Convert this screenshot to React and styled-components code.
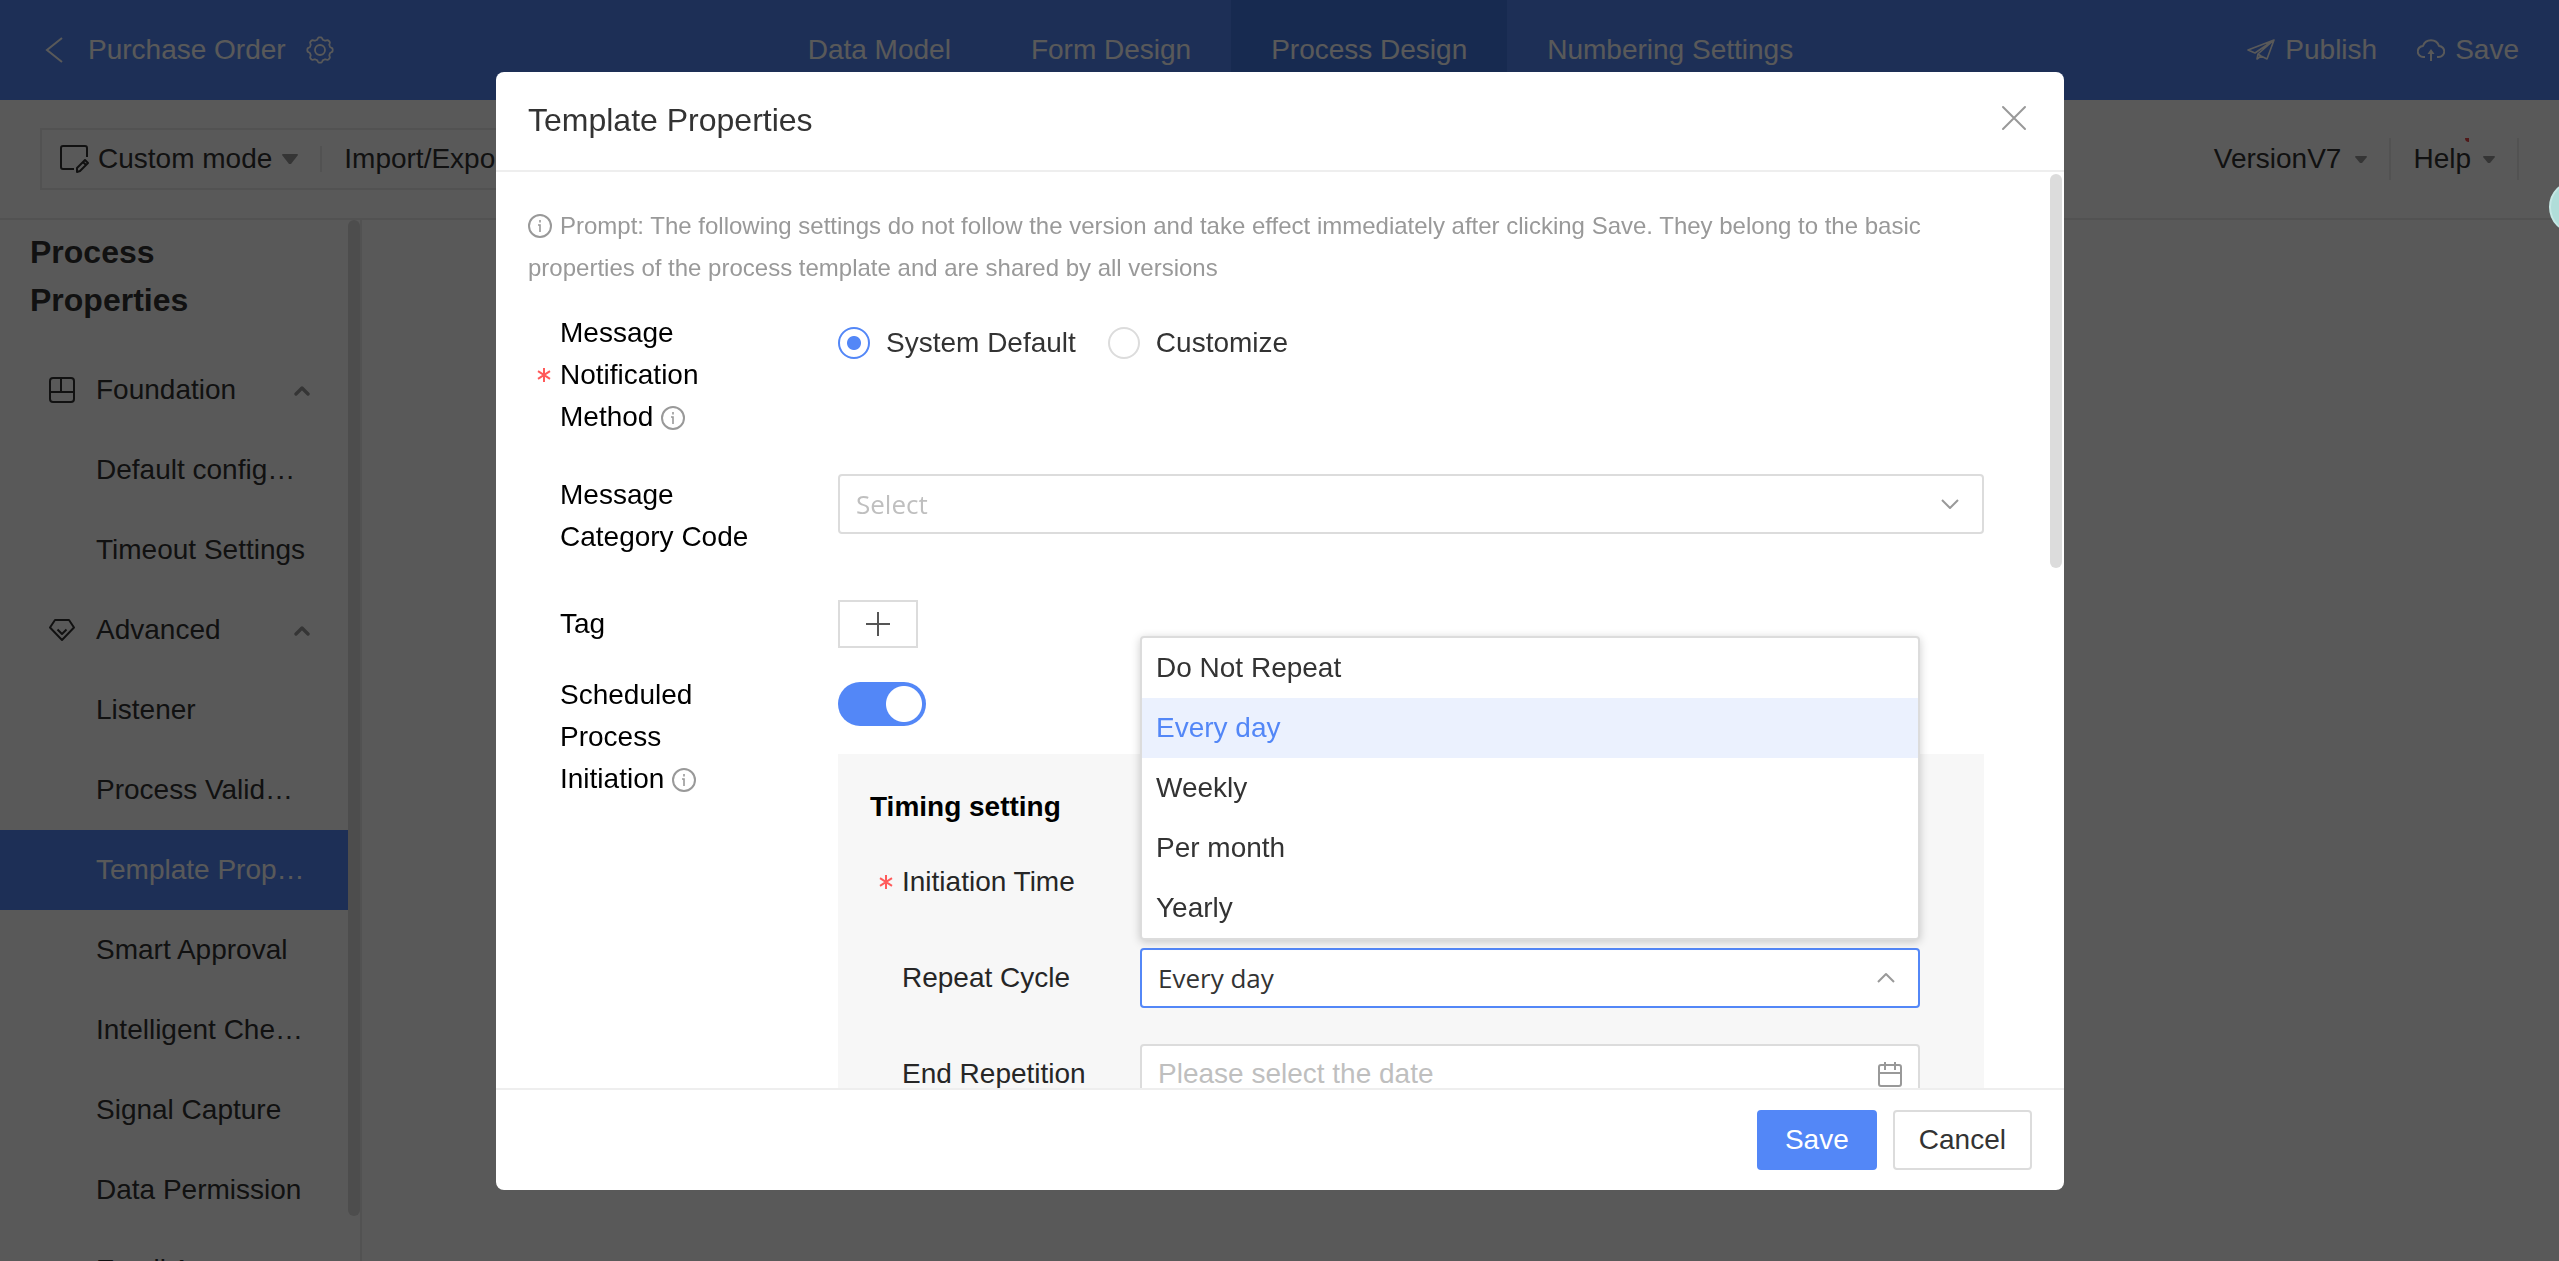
import React from "react";
import styled, { createGlobalStyle, css } from "styled-components";

const font = '"Liberation Sans", Arial, sans-serif';
const inputFont = '"Open Sans", "Segoe UI", sans-serif';
const blue = "#5387f7";

const Global = createGlobalStyle`
  * { box-sizing: border-box; }
  html, body { margin: 0; height: 100%; }
  body { overflow: hidden; font-family: ${font}; font-size: 28px; color: #333; background: #fff; }
  button, input, select { font: inherit; color: inherit; margin: 0; }
  ul, h1, h2, h3, p { margin: 0; padding: 0; font: inherit; list-style: none; }
  svg { display: block; flex: none; }
`;

const Page = styled.div`
  height: 100vh;
  display: flex;
  flex-direction: column;
`;

/* ---------- header ---------- */
const Header = styled.header`
  height: 100px;
  flex: none;
  display: flex;
  align-items: stretch;
  background: ${blue};
  color: #fff;
`;
const HeaderLeft = styled.div`
  width: 30%;
  display: flex;
  align-items: center;
  padding-left: 42px;
  gap: 20px;
`;
const BareButton = styled.button`
  display: inline-flex;
  align-items: center;
  gap: ${(p) => p.$gap || 0}px;
  padding: 0;
  border: 0;
  background: none;
  white-space: nowrap;
`;
const Tabs = styled.nav`
  display: flex;
`;
const Tab = styled.a`
  display: flex;
  align-items: center;
  padding: 0 40px;
  color: inherit;
  text-decoration: none;
  white-space: nowrap;
  background: ${(p) => (p.$active ? "#4378e6" : "none")};
`;
const HeaderRight = styled.div`
  margin-left: auto;
  display: flex;
  align-items: center;
  gap: 40px;
  padding-right: 40px;
`;

/* ---------- toolbar ---------- */
const Toolbar = styled.div`
  height: 120px;
  flex: none;
  display: flex;
  align-items: center;
  justify-content: space-between;
  padding: 0 40px;
  border-bottom: 2px solid #ececec;
`;
const ToolGroup = styled.div`
  height: 62px;
  width: 720px;
  display: flex;
  align-items: center;
  padding: 0 18px;
  gap: 22px;
  border: 2px solid #ececec;
`;
const Divider = styled.span`
  width: 2px;
  height: ${(p) => p.$h}px;
  background: #ececec;
`;
const CaretGap = styled.span`
  display: inline-flex;
  align-items: center;
  gap: 10px;
`;
const ToolRight = styled.div`
  display: flex;
  align-items: center;
  gap: 22px;
`;
const HelpButton = styled(BareButton)`
  position: relative;
`;
const Mark = styled.span`
  position: absolute;
  top: -5px;
  left: 52px;
  width: 4px;
  height: 4px;
  border-radius: 0 0 0 4px;
  background: #e54545;
`;

/* ---------- sidebar ---------- */
const Main = styled.div`
  flex: 1;
  min-height: 0;
  display: flex;
`;
const Sidebar = styled.aside`
  width: 362px;
  display: flex;
  overflow: hidden;
  border-right: 2px solid #ececec;
`;
const SideContent = styled.div`
  flex: 1;
  min-width: 0;
`;
const SideTitle = styled.h2`
  width: 220px;
  padding: 8px 0 26px 30px;
  font-size: 32px;
  line-height: 48px;
  font-weight: bold;
`;
const Track = styled.div`
  width: 12px;
  height: ${(p) => p.$h};
  border-radius: 6px;
  background: #dcdcdc;
`;
const GroupRow = styled.button`
  width: 100%;
  height: 80px;
  display: flex;
  align-items: center;
  gap: 20px;
  padding: 0 38px 0 48px;
  border: 0;
  background: none;
  text-align: left;
  span { flex: 1; }
`;
const ItemLink = styled.a`
  display: block;
  height: 80px;
  line-height: 80px;
  padding-left: 96px;
  white-space: nowrap;
  color: ${(p) => (p.$active ? "#fff" : "inherit")};
  background: ${(p) => (p.$active ? blue : "none")};
  text-decoration: none;
`;

/* ---------- modal ---------- */
const Overlay = styled.div`
  position: fixed;
  inset: 0;
  display: flex;
  justify-content: center;
  align-items: stretch;
  padding: 72px 0 71px 1px;
  background: rgba(0, 0, 0, 0.65);
`;
const Modal = styled.section`
  width: 90%;
  max-width: 1568px;
  display: flex;
  flex-direction: column;
  overflow: hidden;
  border-radius: 8px;
  background: #fff;
`;
const ModalHead = styled.div`
  height: 100px;
  flex: none;
  display: flex;
  align-items: center;
  justify-content: space-between;
  padding: 0 36px 2px 32px;
  border-bottom: 2px solid #eee;
  h1 { font-size: 32px; line-height: 48px; }
`;
const CloseButton = styled(BareButton)`
  padding-bottom: 4px;
`;
const ModalBody = styled.div`
  flex: 1;
  min-height: 0;
  display: flex;
  overflow: hidden;
  padding: 2px 2px 0 32px;
`;
const Form = styled.form`
  flex: 1;
  min-width: 0;
  padding-top: 31px;
`;
const ModalFoot = styled.div`
  height: 102px;
  flex: none;
  display: flex;
  align-items: center;
  justify-content: flex-end;
  gap: 16px;
  padding: 0 32px;
  border-top: 2px solid #eee;
`;
const ActionButton = styled.button`
  min-width: 120px;
  height: 60px;
  padding: 0 24px;
  border-radius: 4px;
  border: 2px solid ${(p) => (p.$primary ? blue : "#dcdcdc")};
  background: ${(p) => (p.$primary ? blue : "#fff")};
  color: ${(p) => (p.$primary ? "#fff" : "#333")};
`;
const Prompt = styled.p`
  padding-right: 60px;
  font-size: 24px;
  line-height: 42px;
  color: #999;
  svg { display: inline-block; vertical-align: -4px; margin-right: 8px; }
`;
const Row = styled.div`
  display: grid;
  grid-template-columns: 278px 1fr;
  align-items: start;
  padding: 0 66px 0 32px;
  margin-top: ${(p) => p.$top}px;
`;
const labelText = css`
  position: relative;
  display: block;
  line-height: 42px;
  color: #000;
`;
const Label = styled.label`
  ${labelText}
  width: 200px;
  padding-top: ${(p) => p.$pad || 0}px;
`;
const GroupLabel = styled.div`
  ${labelText}
  width: 200px;
`;
const Hint = styled.span`
  display: inline-block;
  height: 24px;
  margin-left: 8px;
  vertical-align: -4px;
`;
const Star = styled.span`
  position: absolute;
  left: -23px;
  top: calc(50% - 7px);
  width: 14px;
  height: 14px;
`;
const RadioRow = styled.div`
  display: flex;
  gap: 32px;
  padding-top: 10px;
`;
const RadioLabel = styled.label`
  display: flex;
  align-items: center;
  gap: 16px;
  height: 42px;
`;
const Radio = styled.input.attrs({ type: "radio" })`
  appearance: none;
  width: 32px;
  height: 32px;
  border: 2px solid #dcdcdc;
  border-radius: 50%;
  background: #fff;
  &:checked {
    border-color: ${blue};
    background: radial-gradient(circle, ${blue} 6.5px, #fff 7.5px);
  }
`;
const Field = styled.div`
  position: relative;
  display: grid;
  align-items: center;
  > svg {
    position: absolute;
    right: ${(p) => p.$icon || 25}px;
    pointer-events: none;
  }
`;
const box = css`
  width: 100%;
  height: 60px;
  padding: 0 16px;
  border: 2px solid ${(p) => (p.$open ? blue : "#dcdcdc")};
  border-radius: 4px;
  background: #fff;
  outline: none;
`;
const Select = styled.select`
  ${box}
  appearance: none;
  font-family: ${inputFont};
  font-size: 26px;
  color: ${(p) => (p.$empty ? "#bfbfbf" : "#333")};
`;
const Input = styled.input`
  ${box}
  &::placeholder { color: #bfbfbf; opacity: 1; }
`;
const AddButton = styled.button`
  width: 80px;
  height: 48px;
  display: grid;
  place-items: center;
  padding: 0;
  border: 2px solid #dcdcdc;
  background: #fff;
`;
const ScheduleCell = styled.div`
  padding-top: 8px;
`;
const Switch = styled.input.attrs({ type: "checkbox", role: "switch" })`
  appearance: none;
  display: block;
  width: 88px;
  height: 44px;
  border-radius: 22px;
  background: radial-gradient(circle at 66px 22px, #fff 17.5px, ${blue} 18.5px);
`;
const Panel = styled.div`
  margin-top: 28px;
  padding: 32px 64px 40px 32px;
  background: #f7f7f7;
  h3 { font-weight: bold; line-height: 42px; color: #000; margin-bottom: 24px; }
`;
const PanelRow = styled.div`
  display: grid;
  grid-template-columns: 238px 1fr;
  align-items: center;
  padding-left: 32px;
  margin-bottom: 36px;
`;
const PanelLabel = styled.label`
  ${labelText}
  color: #262626;
`;
const Menu = styled.ul`
  position: absolute;
  z-index: 2;
  left: 0;
  right: 0;
  bottom: calc(100% + 8px);
  border: 2px solid #dcdcdc;
  border-radius: 4px;
  background: #fff;
  box-shadow: 0 2px 10px rgba(0, 0, 0, 0.2);
`;
const Option = styled.li`
  height: 60px;
  line-height: 60px;
  padding: 0 14px;
  color: ${(p) => (p.$on ? blue : "#333")};
  background: ${(p) => (p.$on ? "#ebf1fe" : "none")};
`;
const Floater = styled.button`
  position: fixed;
  z-index: 3;
  right: -44px;
  top: 180px;
  width: 54px;
  height: 54px;
  padding: 0;
  border: 2px solid #c5e8e5;
  border-radius: 50%;
  background: #b0ddd9;
`;

/* ---------- icons ---------- */
const Svg = ({ w, h, sw = 2, c = "currentColor", children }) => (
  <svg width={w} height={h} viewBox={`0 0 ${w} ${h}`} fill="none" stroke={c}
    strokeWidth={sw} strokeLinejoin="round" aria-hidden="true">{children}</svg>
);
const Info = () => (
  <Svg w={24} h={24} c="#999">
    <circle cx="12" cy="12" r="11" />
    <path d="M12 6v2.5M10 11h2v7" strokeWidth="1.6" strokeLinejoin="miter" />
  </Svg>
);
const Asterisk = () => (
  <Svg w={14} h={14} c="#ff5a5a"><path d="M7 0v14M1 3.2l12 7.6M13 3.2l-12 7.6" /></Svg>
);
const Caret = ({ w, h }) => (
  <Svg w={w} h={h} c="none"><path d={`M0 1Q0 0 1 0H${w - 1}Q${w} 0 ${w} 1L${w / 2 + 1} ${h}H${w / 2 - 1}Z`} fill="#999" /></Svg>
);
const UpSmall = () => (
  <Svg w={16} h={12} sw={3.4} c="#999"><path d="M2 10 8 4l6 6" strokeLinecap="round" /></Svg>
);
const Chevron = ({ up }) => (
  <Svg w={18} h={12} c="#999"><path d={up ? "M1 10 9 2l8 8" : "M1 2l8 8 8-8"} /></Svg>
);

const sideGroups = [
  {
    name: "Foundation",
    icon: (
      <Svg w={28} h={28}><rect x="2" y="2" width="24" height="24" rx="3" /><path d="M2 16h24M13 2v14" /></Svg>
    ),
    items: ["Default config…", "Timeout Settings"],
  },
  {
    name: "Advanced",
    icon: (
      <Svg w={28} h={28}><path d="M7 4h14l5 7.500L14 24 2 11.500Z" /><path d="M9.500 13.500 14 18l4.500-4.500" /></Svg>
    ),
    items: ["Listener", "Process Valid…", "Template Prop…", "Smart Approval",
      "Intelligent Che…", "Signal Capture", "Data Permission", "Email Approver"],
  },
];
const tabs = ["Data Model", "Form Design", "Process Design", "Numbering Settings"];
const cycles = ["Do Not Repeat", "Every day", "Weekly", "Per month", "Yearly"];

function gearPath() {
  const pts = [];
  for (let i = 0; i <= 96; i++) {
    const a = (i / 96) * Math.PI * 2;
    const r = 11.6 + 1.1 * Math.tanh(2.2 * Math.cos(8 * a));
    pts.push(`${(14 + r * Math.cos(a)).toFixed(2)} ${(14 + r * Math.sin(a)).toFixed(2)}`);
  }
  return `M${pts.join("L")}Z`;
}

export default function App() {
  return (
    <>
      <Global />
      <Page>
        <Header>
          <HeaderLeft>
            <BareButton aria-label="Back">
              <Svg w={26} h={28}><path d="M20 2 5 14l15 12" strokeLinejoin="miter" /></Svg>
            </BareButton>
            <span>Purchase Order</span>
            <BareButton aria-label="Settings">
              <Svg w={28} h={28} sw={1.8}><path d={gearPath()} /><circle cx="14" cy="14" r="5" /></Svg>
            </BareButton>
          </HeaderLeft>
          <Tabs>
            {tabs.map((t) => <Tab key={t} href="#" $active={t === "Process Design"}>{t}</Tab>)}
          </Tabs>
          <HeaderRight>
            <BareButton $gap={10}>
              <Svg w={28} h={22} sw={1.6}>
                <path d="M27 1 1 11l7 3L27 1 11 15l-1 5 4-3 6 3L27 1M11 15l3 2" />
              </Svg>
              Publish
            </BareButton>
            <BareButton $gap={10}>
              <Svg w={28} h={24}>
                <path d="M8 19H6.500a5.500 5.500 0 0 1-.5-11 8.500 8.500 0 0 1 16 0 5.500 5.500 0 0 1-.5 11H20" />
                <path d="M14 23v-9" />
                <path d="M14 11l-3.500 5h7Z" fill="currentColor" stroke="none" />
              </Svg>
              Save
            </BareButton>
          </HeaderRight>
        </Header>
        <Toolbar>
          <ToolGroup>
            <BareButton $gap={6}>
              <Svg w={32} h={30}>
                <path d="M14 25H3a2 2 0 0 1-2-2V4a2 2 0 0 1 2-2h22a2 2 0 0 1 2 2v9" />
                <path d="M17 28v-4l8-8 3 3-8 8Z M23 18l3 3" />
              </Svg>
              <CaretGap>Custom mode<Caret w={16} h={10} /></CaretGap>
            </BareButton>
            <Divider $h={26} />
            <BareButton>Import/Export</BareButton>
          </ToolGroup>
          <ToolRight>
            <BareButton $gap={14}>VersionV7<Caret w={12} h={7} /></BareButton>
            <Divider $h={42} />
            <HelpButton $gap={12}>Help<Mark /><Caret w={12} h={7} /></HelpButton>
            <Divider $h={42} />
          </ToolRight>
        </Toolbar>
        <Main>
          <Sidebar>
            <SideContent>
              <SideTitle>Process Properties</SideTitle>
              {sideGroups.map((g) => (
                <React.Fragment key={g.name}>
                  <GroupRow>{g.icon}<span>{g.name}</span><UpSmall /></GroupRow>
                  {g.items.map((i) => (
                    <ItemLink key={i} href="#" $active={i === "Template Prop…"}>{i}</ItemLink>
                  ))}
                </React.Fragment>
              ))}
            </SideContent>
            <Track $h="calc(100% - 45px)" />
          </Sidebar>
        </Main>
      </Page>

      <Overlay>
        <Modal role="dialog" aria-modal="true" aria-labelledby="dialog-title">
          <ModalHead>
            <h1 id="dialog-title">Template Properties</h1>
            <CloseButton aria-label="Close">
              <Svg w={28} h={28} c="#999"><path d="M3 3l22 22M25 3 3 25" strokeLinecap="round" /></Svg>
            </CloseButton>
          </ModalHead>
          <ModalBody>
            <Form>
              <Prompt>
                <Info />
                Prompt: The following settings do not follow the version and take effect immediately
                after clicking Save. They belong to the basic properties of the process template and
                are shared by all versions
              </Prompt>
              <Row $top={23}>
                <GroupLabel id="notify">
                  <Star><Asterisk /></Star>Message Notification Method<Hint><Info /></Hint>
                </GroupLabel>
                <RadioRow role="radiogroup" aria-labelledby="notify">
                  <RadioLabel><Radio name="notify" defaultChecked />System Default</RadioLabel>
                  <RadioLabel><Radio name="notify" />Customize</RadioLabel>
                </RadioRow>
              </Row>
              <Row $top={36}>
                <Label htmlFor="category">Message Category Code</Label>
                <Field>
                  <Select id="category" $empty><option>Select</option></Select>
                  <Chevron />
                </Field>
              </Row>
              <Row $top={42}>
                <Label htmlFor="tag" $pad={3}>Tag</Label>
                <AddButton id="tag" type="button" aria-label="Add tag">
                  <Svg w={24} h={24} c="#555"><path d="M12 0v24M0 12h24" /></Svg>
                </AddButton>
              </Row>
              <Row $top={26}>
                <Label htmlFor="schedule">Scheduled Process Initiation<Hint><Info /></Hint></Label>
                <ScheduleCell>
                  <Switch id="schedule" defaultChecked />
                  <Panel>
                    <h3>Timing setting</h3>
                    <PanelRow>
                      <PanelLabel htmlFor="time"><Star><Asterisk /></Star>Initiation Time</PanelLabel>
                      <Field><Input id="time" /></Field>
                    </PanelRow>
                    <PanelRow>
                      <PanelLabel htmlFor="cycle">Repeat Cycle</PanelLabel>
                      <Field>
                        <Select id="cycle" $open defaultValue="Every day">
                          {cycles.map((c) => <option key={c}>{c}</option>)}
                        </Select>
                        <Chevron up />
                        <Menu role="listbox" aria-label="Repeat Cycle">
                          {cycles.map((c) => (
                            <Option key={c} role="option" aria-selected={c === "Every day"} $on={c === "Every day"}>{c}</Option>
                          ))}
                        </Menu>
                      </Field>
                    </PanelRow>
                    <PanelRow>
                      <PanelLabel htmlFor="end">End Repetition</PanelLabel>
                      <Field $icon={17}>
                        <Input id="end" placeholder="Please select the date" />
                        <Svg w={26} h={26} c="#999"><rect x="2" y="4" width="22" height="21" rx="2" /><path d="M2 12h22M8 1v8M18 1v8" /></Svg>
                      </Field>
                    </PanelRow>
                  </Panel>
                </ScheduleCell>
              </Row>
            </Form>
            <Track $h="394px" />
          </ModalBody>
          <ModalFoot>
            <ActionButton $primary>Save</ActionButton>
            <ActionButton>Cancel</ActionButton>
          </ModalFoot>
        </Modal>
      </Overlay>
      <Floater aria-label="Assistant" />
    </>
  );
}
